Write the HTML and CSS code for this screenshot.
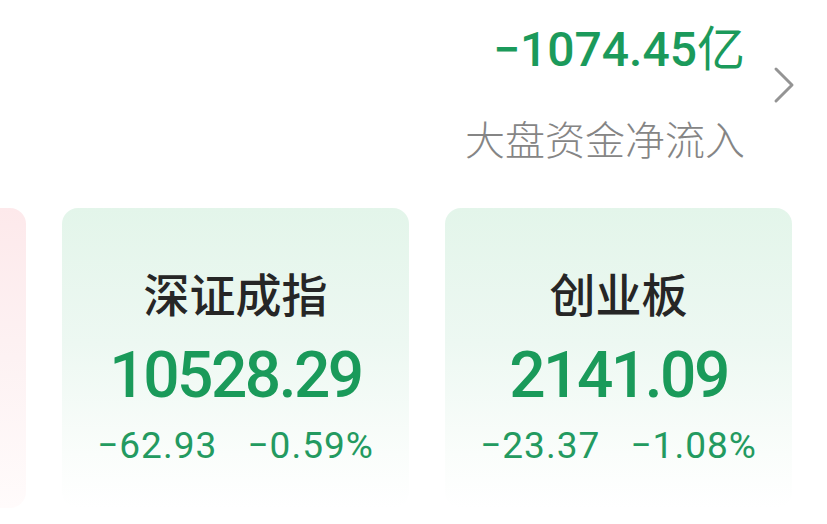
FILE: index.html
```html
<!DOCTYPE html>
<html lang="zh-CN">
<head>
  <meta charset="UTF-8">
  <meta name="viewport" content="width=device-width, initial-scale=1.0">
  <title>大盘</title>
  <link rel="stylesheet" href="styles.css">
</head>
<body>
  <div class="flow">
    <div class="flow-text">
      <div class="flow-value">−1074.45<span class="unit">亿</span></div>
      <div class="flow-label">大盘资金净流入</div>
    </div>
    <svg class="flow-arrow" width="22" height="38" viewBox="0 0 22 38">
      <path d="M3 3 L19 19 L3 35" fill="none" stroke="#949494" stroke-width="3" stroke-linecap="round" stroke-linejoin="round"/>
    </svg>
  </div>

  <div class="index-row">
    <!-- previous card, only its edge shows -->
    <div class="index-card up stub"></div>

    <div class="index-card down">
      <div class="index-name">深证成指</div>
      <div class="index-price">10528.29</div>
      <div class="index-change">
        <span>−62.93</span>
        <span>−0.59%</span>
      </div>
    </div>

    <div class="index-card down">
      <div class="index-name">创业板</div>
      <div class="index-price">2141.09</div>
      <div class="index-change">
        <span>−23.37</span>
        <span>−1.08%</span>
      </div>
    </div>
  </div>
</body>
</html>
```

FILE: styles.css
```css
body {
  margin: 0;
  background: #fff;
  font-family: Roboto, "Noto Sans CJK SC", sans-serif;
  overflow: hidden;
  height: 524px;
}

/* capital flow summary, top right */
.flow {
  display: flex;
  justify-content: flex-end;
  align-items: center;
  padding: 22px 32px 0 0;
}
.flow-text {
  text-align: right;
}
.flow-value {
  height: 56px;
  font-size: 48px;
  line-height: 56px;
  font-weight: 500;
  color: #1b9a5b;
}
.flow-value .unit {
  font-family: "Noto Sans CJK SC", sans-serif;
  font-weight: 400;
  line-height: 40px;
}
.flow-label {
  margin-top: 34px;
  font-family: "Noto Sans CJK SC", sans-serif;
  font-size: 40px;
  line-height: 52px;
  font-weight: 300;
  color: #858585;
}
.flow-arrow {
  margin-left: 28px;
  margin-top: -16px;
}

/* index cards */
.index-row {
  display: flex;
  gap: 36px;
  margin-top: 44px;
}
.index-card {
  flex: 0 0 347px;
  height: 300px;
  border-radius: 16px;
  text-align: center;
}
.index-card.stub {
  flex-basis: 26px;
  border-radius: 0 16px 16px 0;
}
.index-card.down {
  background: linear-gradient(180deg, #e3f5ea 0%, #edf8f2 45%, #fafdfb 82%, #ffffff 100%);
}
.index-card.up {
  background: linear-gradient(180deg, #fde9eb 0%, #fdf2f3 50%, #fffbfb 100%);
}
.index-name {
  padding-top: 56px;
  font-family: "Noto Sans CJK SC", sans-serif;
  font-size: 46px;
  line-height: 56px;
  font-weight: 500;
  color: #262626;
}
.index-price {
  margin-top: 20px;
  font-size: 64px;
  line-height: 72px;
  font-weight: 500;
  letter-spacing: -2.5px;
  color: #1a9a5a;
}
.index-change {
  margin-top: 12px;
  font-size: 37px;
  line-height: 44px;
  letter-spacing: 1px;
  color: #239a60;
}
.index-change span + span {
  margin-left: 20px;
}
```
